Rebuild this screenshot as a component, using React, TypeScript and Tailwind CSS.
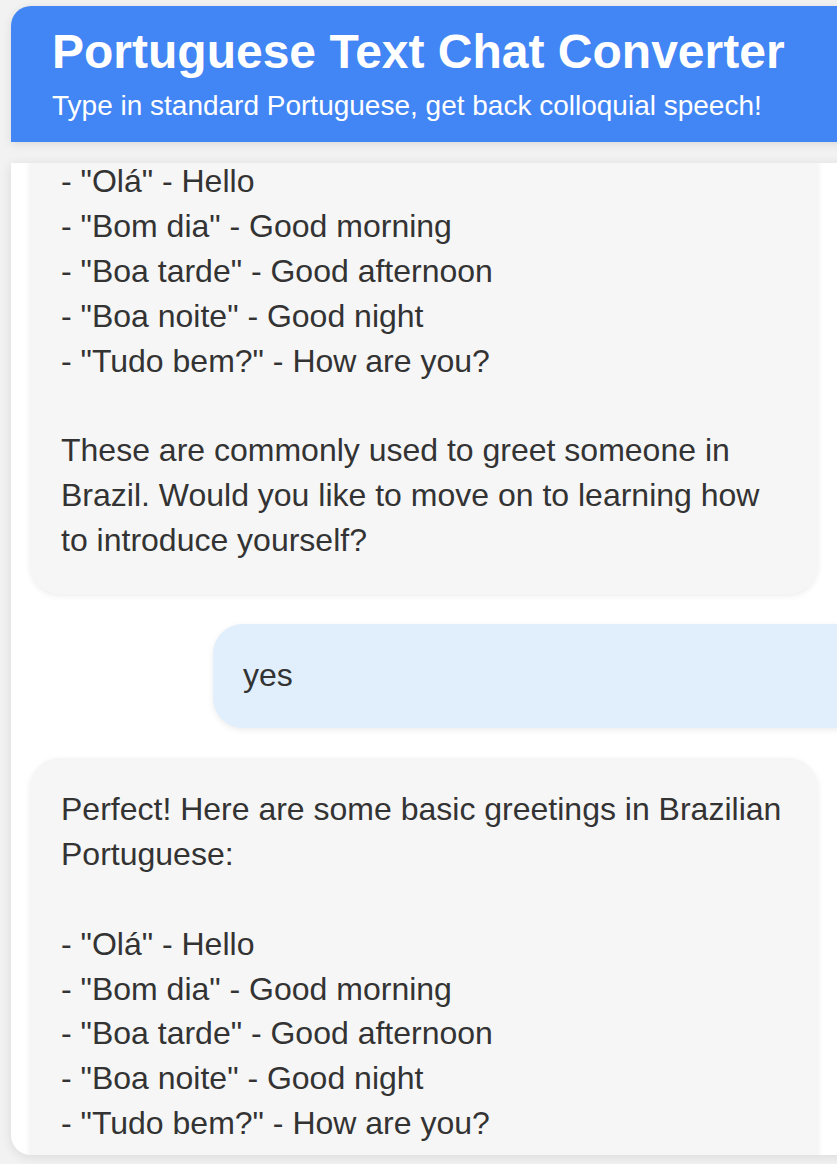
import { useLayoutEffect, useRef } from "react";

type Message = {
  from: "bot" | "user";
  text: string;
};

const greeting = `Perfect! Here are some basic greetings in Brazilian Portuguese:

- "Olá" - Hello
- "Bom dia" - Good morning
- "Boa tarde" - Good afternoon
- "Boa noite" - Good night
- "Tudo bem?" - How are you?

These are commonly used to greet someone in Brazil. Would you like to move on to learning how to introduce yourself?`;

const messages: Message[] = [
  { from: "bot", text: greeting },
  { from: "user", text: "yes" },
  { from: "bot", text: greeting },
];

const Bubble = ({ message }: { message: Message }) => {
  if (message.from === "user") {
    return (
      <div className="ml-[183px] rounded-l-[30px] bg-[#e1effd] pl-[30px] pr-[30px] pt-[29px] pb-[31px] shadow-[0_2px_6px_rgba(0,0,0,0.08)]">
        <p className="whitespace-pre-line">{message.text}</p>
      </div>
    );
  }
  return (
    <div className="w-[788px] rounded-[30px] bg-[#f6f6f6] px-[31px] pt-[29px] pb-[31px] shadow-[0_2px_6px_rgba(0,0,0,0.08)]">
      <p className="whitespace-pre-line">{message.text}</p>
    </div>
  );
};

export default function App() {
  const chatRef = useRef<HTMLDivElement>(null);

  // the chat is shown scrolled part way down
  useLayoutEffect(() => {
    if (chatRef.current) chatRef.current.scrollTop = 187;
  }, []);

  return (
    <div className="h-screen w-full overflow-hidden bg-[#f2f2f2] pl-[11px] pt-[6px] font-['Liberation_Sans',Arial,sans-serif]">
      <div className="flex w-[1100px] flex-col">
        <header className="rounded-tl-[20px] bg-[#4285f4] px-[41px] pt-[18px] pb-[19px] text-white shadow-[0_2px_10px_rgba(0,0,0,0.1)]">
          <h1 className="text-[48px] font-bold leading-[56px]">
            Portuguese Text Chat Converter
          </h1>
          <p className="mt-[9px] text-[28px] leading-[34px]">
            Type in standard Portuguese, get back colloquial speech!
          </p>
        </header>
        <div
          ref={chatRef}
          className="mt-[21px] h-[992px] overflow-hidden rounded-bl-[20px] bg-white px-[19px] shadow-[0_2px_12px_rgba(0,0,0,0.1)]"
        >
          <div className="flex flex-col gap-[30px] py-[20px] text-[32px] leading-[1.4] text-[#333]">
            {messages.map((m, i) => (
              <Bubble key={i} message={m} />
            ))}
          </div>
        </div>
      </div>
    </div>
  );
}
